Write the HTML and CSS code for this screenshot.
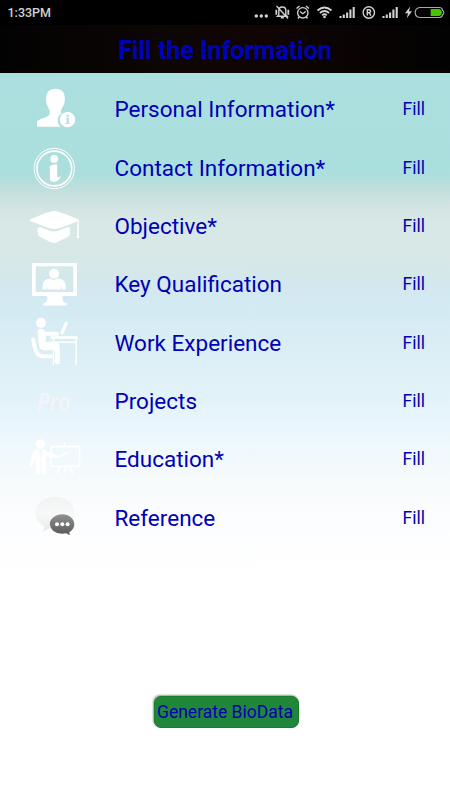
FILE: index.html
```html
<!DOCTYPE html>
<html lang="en">
<head>
<meta charset="utf-8">
<title>Fill the Information</title>
<link rel="stylesheet" href="styles.css">
</head>
<body>
<div class="status">
  <span class="time">1:33PM</span>
  <svg class="status-icons" viewBox="250 0 200 25" fill="none" stroke="#d2d2d2" stroke-width="1.4">
    <g fill="#d2d2d2" stroke="none"><circle cx="256.3" cy="16" r="1.7"/><circle cx="261.3" cy="16" r="1.7"/><circle cx="266.3" cy="16" r="1.7"/></g>
    <path d="M278.800 15V10.500q0-3.500 3.500-3.500t3.500 3.500V15l1.300 1.300h-9.600zM280.800 17.800h3M276.500 6l11.500 12.500"/>
    <path d="M276.300 9.800v5M288.300 9.800v5" stroke-width="1.800"/>
    <circle cx="302.800" cy="12.800" r="5.200"/><path d="M300 11.500l2.800 2.200 3-2.200M296.500 8.500l3-2.500M309 8.500l-3-2.500M299 17l-1 1.500M306.500 17l1 1.500"/>
    <path d="M317.500 10.500q7-6 14 0M319.900 13q4.600-4 9.200 0M322.200 15.200q2.300-2 4.600 0" stroke-width="1.800"/><circle cx="324.500" cy="17" r="1.300" fill="#d2d2d2" stroke="none"/>
    <path id="sig" d="M340.500 18v-2M343.800 18v-3.500M347.100 18v-5.500M350.400 18V9.500M353.700 18V7" stroke-width="2.100"/>
    <use href="#sig" x="43"/>
    <circle cx="368.800" cy="12.500" r="5.700"/><path d="M367.300 15.600V9.700h1.800a1.500 1.500 0 0 1 0 3h-1.800M369.300 12.700l1.600 2.900"/>
    <path d="M410.200 6.500l-5.200 6.800h3l-1.200 5 5.200-7h-3z" fill="#d2d2d2" stroke="none"/>
    <path d="M420 7.500h19.300q3 0 3.300 3 1.200 0 1.200 2t-1.200 2q-.3 3-3.300 3H420q-4.800-.5-4.800-5t4.800-5z" stroke="#a9a9a9" stroke-width="1.200"/>
    <path d="M430.700 9h8.500q2 .3 3 3.500-1 3.200-3 3.500h-8.500z" fill="#49c500" stroke="none"/>
  </svg>
</div>
<header class="title">Fill the Information</header>
<main class="content">
  <ul class="list">
    <li class="row">
      <svg class="icon" viewBox="25 80.33 60 58.33"><path d="M37 127v-5q1-2 6-3.500 5-1.500 6.500-4 1.300-3-1-6Q46 104.500 46 99q0-9.500 9.500-9.800Q65 89.500 65 99q0 5-3 9.500-2 3.500-.5 5-3.800 2.500-3.800 7 0 4 3 6.500z"/><circle cx="67.500" cy="120" r="7.700"/><path class="hole" d="M66 118h2.700v5.200h1.200v1h-4.300v-1h1.100V119H66zM66.600 115.200h2.200v1.800h-2.200z"/></svg>
      <span class="name">Personal Information*</span><a class="fill">Fill</a>
    </li>
    <li class="row">
      <svg class="icon" viewBox="25 138.66 60 58.33"><g fill="none" stroke="#fff"><circle cx="54.300" cy="168.200" r="20.200" stroke-width="1"/><circle cx="54.300" cy="168.200" r="17.400" stroke-width="1.700"/></g><circle cx="54.200" cy="158.600" r="3.900"/><path d="M48.700 167.200q2.500-3.500 8.500-3.400v12.500q.2 1.700 3.600-.3-1.500 5-6.500 5.600-5 0-4.400-4v-10q-.1-1-1.200-.4z"/></svg>
      <span class="name">Contact Information*</span><a class="fill">Fill</a>
    </li>
    <li class="row">
      <svg class="icon" viewBox="25 197 60 58.33"><path d="M28.800 220.200Q49 211 54 211t24.500 8.500q1 .5 0 1.200Q59 229 54 229t-25.200-8.800zM37.500 229q1-3 6-.5 5 2.500 10.500 3 5-.5 10.500-3 4.500-2.500 5.500 0v6.500q-1.500 2-8.500 5-5 3-7.500 3t-7.500-3q-7-3-8.500-5z"/><path d="M77.300 220.500h1.500v15l.8 2.500h-3.500l1.200-2.500z"/></svg>
      <span class="name">Objective*</span><a class="fill">Fill</a>
    </li>
    <li class="row">
      <svg class="icon" viewBox="25 255.33 60 58.33"><path fill-rule="evenodd" d="M33 263.300h43q1 0 1 1v31q0 1-1 1H62.500q-1 6.500 4.500 7.500v2H43v-2q5.500-1 4-7.500H33q-1 0-1-1v-31q0-1 1-1zm2.700 3.400v25.700h37.600v-25.700z"/><circle cx="54.200" cy="274" r="5"/><path d="M50 278.800q4 2.500 8 0 8 .5 8 8.500v2.500h-4v-2h-.8v2H47.300v-2h-.8v2h-4v-2.500q0-8 7.500-8.500z"/></svg>
      <span class="name">Key Qualification</span><a class="fill">Fill</a>
    </li>
    <li class="row">
      <svg class="icon" viewBox="25 313.66 60 58.33"><circle cx="41" cy="322.500" r="5"/><path d="M37.500 332q0-3.500 3.500-3.500 2.500 0 4.500 2.800H57q2 0 2 2t-2 2H46l-.5 6h9q5 .5 5.300 5v15q0 2.500-2.300 2.500t-2.500-2.500v-11.500H44q-4.500-.5-5-5zM50.500 336h27.200v2.500H50.500z"/><path d="M33.200 339q1 8 3.200 12.500 2 4.500 6 4.500h9" fill="none" stroke="#fff" stroke-width="3.800" stroke-linecap="round"/><path d="M62 332.500l4.200-9.500" stroke="#fff" stroke-width="3.300" stroke-linecap="round"/><path d="M53.500 338v26.500M76.200 338v26.500M54 341.800h22" stroke="#fff" stroke-width="1.500"/></svg>
      <span class="name">Work Experience</span><a class="fill">Fill</a>
    </li>
    <li class="row">
      <svg class="icon" viewBox="25 372 60 58.33"><text class="pro" transform="translate(37 411) scale(.82 1)">Pro</text></svg>
      <span class="name">Projects</span><a class="fill">Fill</a>
    </li>
    <li class="row">
      <svg class="icon" viewBox="25 430.33 60 58.33"><circle cx="40.500" cy="444.500" r="4.800"/><path d="M36 450h3l1.500 11 1.800-11h2.500l5 3.500 7.500 2q1.500 1.500-.5 3l-8.500-1.200-2.200-1.300V473q0 1.500-2 1.500h-2.600v-12h-1.200v12h-3q-1.700 0-1.700-1.500v-17l-3 10q-1 1.500-3.500.5l3-12q1-4 3.900-4.500z"/><rect x="51" y="447" width="28.500" height="19.800" rx="1.500" fill="none" stroke="#fff" stroke-width="1.600"/><path d="M64.700 442.500v4M57 458l11.500-5.500M59.500 467l-2 7M65 467v6M70.500 467l2 7" fill="none" stroke="#fff" stroke-width="1.600"/></svg>
      <span class="name">Education*</span><a class="fill">Fill</a>
    </li>
    <li class="row">
      <svg class="icon" viewBox="25 488.66 60 58.33"><defs><linearGradient id="light" x2="0" y2="1"><stop stop-color="#f1f2f2"/><stop offset=".5" stop-color="#f7f8f8"/><stop offset="1" stop-color="#e9eaea"/></linearGradient><linearGradient id="dark" x2="0" y2="1"><stop stop-color="#919191"/><stop offset="1" stop-color="#595959"/></linearGradient></defs><path fill="url(#light)" d="M55 496.500c11 0 19.500 7 19.500 16S66 528.500 55 528.500q-4 0-6-.6-3 2.500-7 2.600 3-2.500 2.300-4.500-9-4.500-9-13.500c0-9 8.700-16 19.700-16z"/><path fill="url(#dark)" d="M62.300 514c6.700 0 12 4.500 12 10 0 3.500-2 6-5 8q-.5 1.500 1.500 2.500-3 0-4.500-1.500-15 2-16.500-9c0-5.500 5.800-10 12.500-10z"/><g fill="#fff"><circle cx="57" cy="524" r="2"/><circle cx="62.300" cy="524" r="2"/><circle cx="67.600" cy="524" r="2"/></g></svg>
      <span class="name">Reference</span><a class="fill">Fill</a>
    </li>
  </ul>
  <button class="generate">Generate BioData</button>
</main>
</body>
</html>
```
FILE: styles.css
```css
* { box-sizing: border-box; }
body {
  margin: 0;
  width: 450px;
  height: 800px;
  overflow: hidden;
  display: flex;
  flex-direction: column;
  font-family: Roboto, sans-serif;
  color: #0000b4;
  background: #fff;
}
.status {
  height: 25px;
  flex: none;
  display: flex;
  align-items: center;
  justify-content: space-between;
  padding-left: 7.5px;
  background: #000;
}
.time { color: #d2d2d2; font-size: 12.5px; font-weight: 500; }
.status-icons { width: 200px; height: 25px; }
.title {
  height: 48px;
  flex: none;
  display: flex;
  align-items: center;
  justify-content: center;
  padding-top: 2px;
  background: linear-gradient(90deg, #030202, #0c0604 35%, #100504 55%, #030202);
  font-size: 25px;
  font-weight: 700;
}
.content {
  flex: 1;
  display: flex;
  flex-direction: column;
  align-items: flex-start;
  padding-top: 7.33px;
  background: linear-gradient(#acdfdf 0, #abdfde 97px, #afdedc 104px, #c3dfdd 119px, #d2e4e3 133px, #d8e8e6 150px, #d7e8e6 182px, #d3e8ed 210px, #d3eaf3 229px, #d9edf5 265px, #dff0f7 300px, #e6f4fb 340px, #eff8fc 372px, #f7fbfc 413px, #fcfdfe 450px, #fff 505px);
}
.list { width: 100%; list-style: none; margin: 0; padding: 0; }
.row { display: flex; align-items: center; height: 58.333px; padding: 0 25px; }
.icon { width: 60px; height: 58.333px; margin-right: 29.5px; fill: #fff; }
.hole { fill: #acdfdf; }
.icon .pro { font: italic 600 26px "Open Sans", sans-serif; fill: #f3f5f8; }
.name { flex: 1; font-size: 22.5px; }
.fill { font-size: 17.5px; }
.generate {
  width: 145px;
  height: 32px;
  margin: 149.500px 0 0 154px;
  padding: 0 0 0 2px;
  border: 1px solid #178027;
  border-radius: 7px;
  background: #208639;
  box-shadow: -1px -1px 2px #999;
  color: #0000b4;
  font: 17.500px Roboto, sans-serif;
  text-align: left;
  white-space: nowrap;
}
```
